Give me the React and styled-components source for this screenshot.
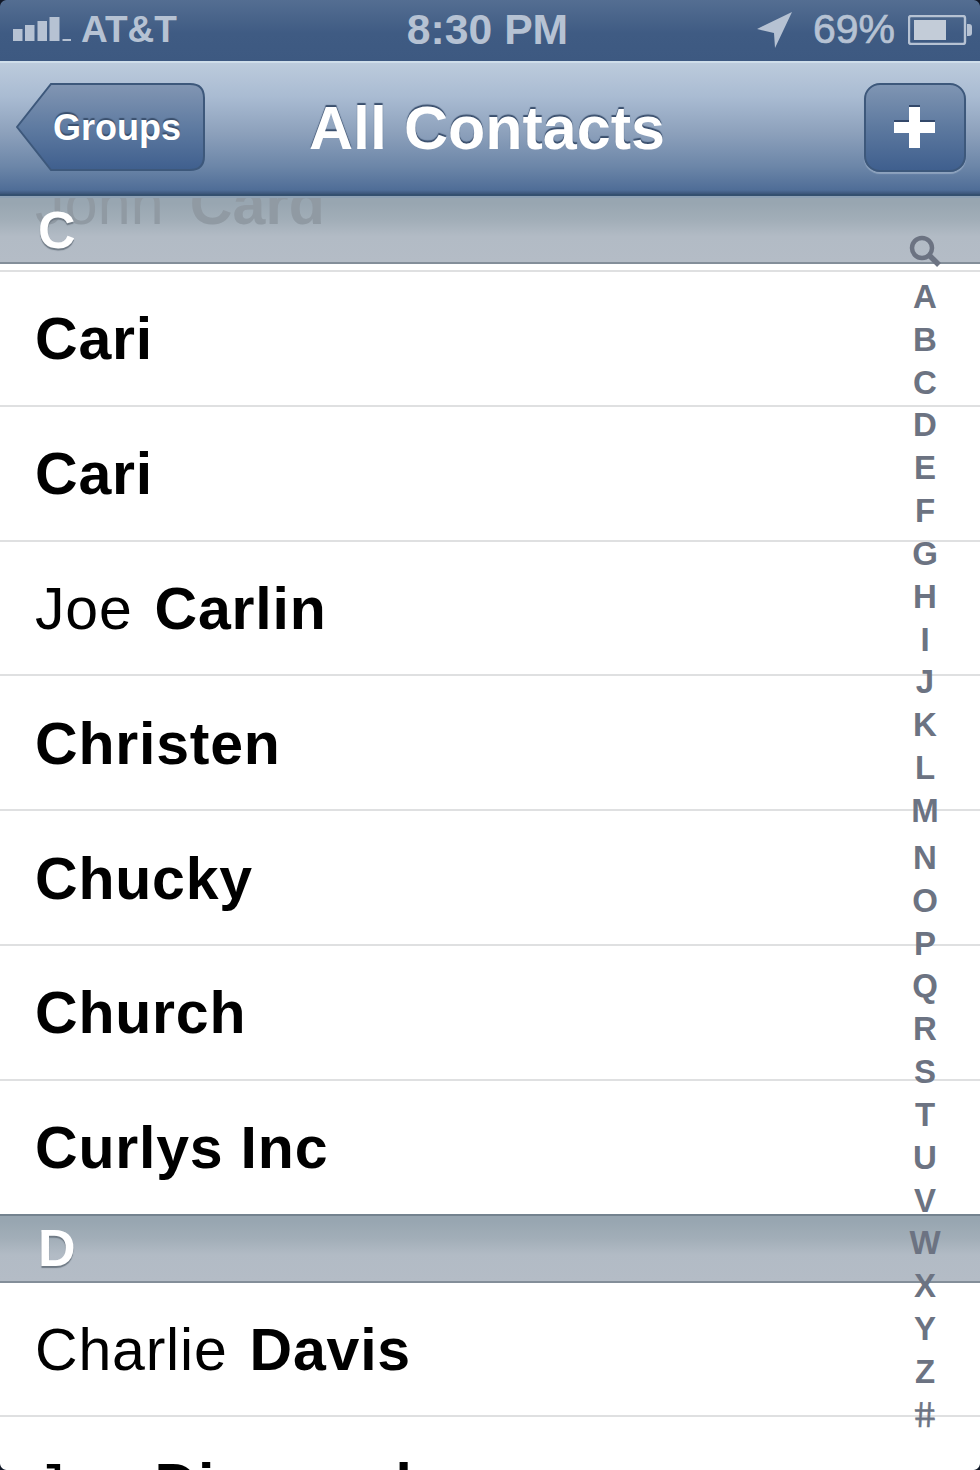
import React from "react";
import styled, { createGlobalStyle } from "styled-components";

const Global = createGlobalStyle`
  html, body { margin: 0; padding: 0; background: #fff; }
  body { font-family: "Liberation Sans", Arial, sans-serif; }
`;

const Phone = styled.div`
  position: relative;
  width: 980px;
  height: 1470px;
  overflow: hidden;
  background: #fff;
`;

const Corner = styled.div`
  position: absolute;
  width: 7px;
  height: 7px;
  ${(p) => (p.$right ? "right: 0;" : "left: 0;")}
  ${(p) => (p.$bottom ? "bottom: 0;" : "top: 0;")}
  background: radial-gradient(
    circle at ${(p) => (p.$right ? "0" : "100%")} ${(p) => (p.$bottom ? "0" : "100%")},
    transparent 6.5px,
    #111827 7.5px
  );
`;

const StatusBar = styled.div`
  height: 61px;
  box-sizing: border-box;
  padding: 0 8px 2px 13px;
  display: grid;
  grid-template-columns: 1fr auto 1fr;
  align-items: center;
  background: linear-gradient(#546e92, #3f5b83 55%, #3d5981);
  color: #b6c2d3;
  font-weight: 700;
`;

const StatusLeft = styled.div`
  display: flex;
  align-items: center;
  gap: 10px;
  font-size: 37px;
`;

const StatusRight = styled.div`
  display: flex;
  align-items: center;
  justify-content: flex-end;
  gap: 20px;
`;

const Clock = styled.div`
  font-size: 42.7px;
  margin-right: 10px;
`;

const Percent = styled.span`
  font-weight: 400;
  font-size: 41px;
  margin-right: -7px;
  -webkit-text-stroke: 0.7px #b6c2d3;
`;

const NavBar = styled.div`
  height: 135px;
  box-sizing: border-box;
  padding: 20px 14px 0 16px;
  display: flex;
  justify-content: space-between;
  align-items: flex-start;
  position: relative;
  background: linear-gradient(#bccbdc 0, #a9bbd2 26%, #8ca0bb 54%, #6c86a8 79%, #4f6d97 97%, #3b5578 100%);
  border-top: 2px solid #cfdeea;
  border-bottom: 2px solid #34506f;
`;

const BackButton = styled.button`
  position: relative;
  width: 190px;
  height: 89px;
  border: 0;
  padding: 0 0 0 37px;
  background: none;
  color: #fff;
  font: 700 36px "Liberation Sans", Arial, sans-serif;
  text-align: left;
  text-shadow: 0 -2px 1px #3a4f6d;
`;

const BackShape = styled.svg`
  position: absolute;
  inset: 0;
  z-index: 0;
`;

const BackLabel = styled.span`
  position: relative;
  z-index: 1;
`;

const Title = styled.div`
  position: absolute;
  left: 0;
  right: 6px;
  top: 30px;
  text-align: center;
  color: #fff;
  font-size: 61px;
  font-weight: 700;
  line-height: 70px;
  text-shadow: 0 -2px 1px #3a4f6d;
  pointer-events: none;
`;

const AddButton = styled.button`
  width: 102px;
  height: 89px;
  border-radius: 16px;
  border: 2px solid #3d587b;
  box-shadow: 0 2px 1px #8ea3be;
  background: linear-gradient(#7f95b3, #5d799f 50%, #3f5f8e);
  display: flex;
  align-items: center;
  justify-content: center;
  padding: 0 2px 0 0;
`;

const PlusIcon = styled.svg`
  filter: drop-shadow(0 -2px 0 #33486a);
`;

const SectionHeader = styled.div`
  position: relative;
  height: ${(p) => p.$height}px;
  box-sizing: border-box;
  overflow: hidden;
  padding-left: 38px;
  display: flex;
  align-items: center;
  background: linear-gradient(#98a6b1 0, #98a6b1 8%, #a2aeb8 35%, #b2bbc5 60%, #b4bcc6 100%);
  border-top: 2px solid ${(p) => p.$top};
  border-bottom: 2px solid #838e99;
  color: #fff;
  font-size: 52px;
  font-weight: 700;
  text-shadow: 0 2px 1px #6f7a85;
`;

const Ghost = styled.span`
  position: absolute;
  left: 35px;
  top: -29px;
  display: flex;
  gap: 26px;
  font-size: 59px;
  font-weight: 700;
  line-height: 70px;
  letter-spacing: 0.2px;
  color: #909aa3;
  text-shadow: none;
  white-space: pre;
`;

const GhostFirst = styled.span`
  font-weight: 400;
`;

const HeaderLetter = styled.span`
  position: relative;
  line-height: 1;
  margin-top: ${(p) => p.$shift || 0}px;
`;

const Gap = styled.div`
  height: 6px;
  border-bottom: 2px solid #dfe0e1;
`;

const Row = styled.div`
  height: ${(p) => p.$height}px;
  box-sizing: border-box;
  padding: 2px 0 0 35px;
  display: flex;
  align-items: center;
  gap: 22px;
  font-size: 59px;
  letter-spacing: 0.8px;
  color: #000;
  border-bottom: ${(p) => (p.$last ? 0 : "2px solid #dfe0e1")};
  white-space: pre;
`;

const First = styled.span`
  font-weight: 400;
`;

const Last = styled.span`
  font-weight: 700;
`;

const Index = styled.div`
  position: absolute;
  top: 233px;
  left: 895px;
  width: 60px;
  display: flex;
  flex-direction: column;
  align-items: center;
  color: #6c7382;
  font-size: 33px;
  font-weight: 700;
`;

const IndexItem = styled.div`
  flex: none;
  height: 42.85px;
  line-height: 42.85px;
  width: 100%;
  margin-top: ${(p) => p.$extra || 0}px;
  text-align: center;
  display: flex;
  align-items: center;
  justify-content: center;
`;

const SearchGlyph = styled.svg`
  margin-top: -6px;
`;

const Hash = styled.span`
  display: inline-block;
  font-size: 36px;
  font-weight: 400;
  transform: skewX(9deg);
  -webkit-text-stroke: 0.6px #6c7382;
`;

const rows = [
  ["", "Cari"],
  ["", "Cari"],
  ["Joe", "Carlin"],
  ["", "Christen"],
  ["", "Chucky"],
  ["", "Church"],
  ["", "Curlys Inc"],
];

const letters = "ABCDEFGHIJKLMNOPQRSTUVWXYZ".split("");

const Name = ({ first, last }) => (
  <>
    {first ? <First>{first}</First> : null}
    <Last>{last}</Last>
  </>
);

export default function App() {
  return (
    <Phone>
      <Global />
      <StatusBar>
        <StatusLeft>
          <svg width="58" height="25" viewBox="0 0 58 25">
            <g fill="#b6c2d3">
              <rect x="0" y="12" width="9.5" height="12" />
              <rect x="12" y="8" width="9.5" height="16" />
              <rect x="24.5" y="4" width="9.5" height="20" />
              <rect x="36.500" y="0" width="10" height="24" />
              <rect x="49.500" y="22" width="8.5" height="2" />
            </g>
          </svg>
          <span>AT&amp;T</span>
        </StatusLeft>
        <Clock>8:30 PM</Clock>
        <StatusRight>
          <svg width="36" height="36" viewBox="0 0 36 36">
            <path d="M35 0 L0 17 L17 21 L18 36 Z" fill="#b6c2d3" />
          </svg>
          <Percent>69%</Percent>
          <svg width="64" height="30" viewBox="0 0 64 30">
            <rect x="1" y="1" width="56" height="28" rx="2" fill="none" stroke="#b6c2d3" strokeWidth="2.4" />
            <rect x="6" y="5" width="32" height="20" fill="#c3ccd8" />
            <path d="M59 9h2q3 0 3 3v6q0 3-3 3h-2z" fill="#b6c2d3" />
          </svg>
        </StatusRight>
      </StatusBar>
      <NavBar>
        <BackButton>
          <BackShape width="190" height="89" viewBox="0 0 190 89">
            <defs>
              <linearGradient id="backFill" x1="0" y1="0" x2="0" y2="1">
                <stop offset="0" stopColor="#8296b3" />
                <stop offset="0.5" stopColor="#5f7ba1" />
                <stop offset="1" stopColor="#3f5f8e" />
              </linearGradient>
            </defs>
            <path
              d="M35 1 H174 Q188 1 188 15 V73 Q188 87 174 87 H35 L1 44 Z"
              fill="url(#backFill)"
              stroke="#3d587b"
              strokeWidth="2"
            />
          </BackShape>
          <BackLabel>Groups</BackLabel>
        </BackButton>
        <Title>All Contacts</Title>
        <AddButton aria-label="Add">
          <PlusIcon width="41" height="41" viewBox="0 0 41 41">
            <path d="M15 0h11v15h15v11H26v15H15V26H0V15h15z" fill="#fff" />
          </PlusIcon>
        </AddButton>
      </NavBar>
      <SectionHeader $height={68} $top="#8ea1b4">
        <Ghost>
          <GhostFirst>John</GhostFirst>
          <span>Card</span>
        </Ghost>
        <HeaderLetter $shift={-1}>C</HeaderLetter>
      </SectionHeader>
      <Gap />
      {rows.map(([first, last], i) => (
        <Row key={i} $height={i === 6 ? 133.2 : 134.8} $last={i === 6}>
          <Name first={first} last={last} />
        </Row>
      ))}
      <SectionHeader $height={69} $top="#74838f">
        <HeaderLetter>D</HeaderLetter>
      </SectionHeader>
      <Row $height={134.5}>
        <Name first="Charlie" last="Davis" />
      </Row>
      <Row $height={134} $last>
        <Name first="Joe" last="Diamond" />
      </Row>
      <Index>
        <IndexItem>
          <SearchGlyph width="32" height="32" viewBox="0 0 32 32">
            <circle cx="13" cy="13" r="10" fill="none" stroke="#6c7382" strokeWidth="4.5" />
            <path d="M20 20 L30 30" stroke="#6c7382" strokeWidth="5.5" />
          </SearchGlyph>
        </IndexItem>
        {letters.map((l) => (
          <IndexItem key={l} $extra={l === "N" ? 4 : 0}>{l}</IndexItem>
        ))}
        <IndexItem>
          <Hash>#</Hash>
        </IndexItem>
      </Index>
      <Corner />
      <Corner $right />
      <Corner $bottom />
      <Corner $right $bottom />
    </Phone>
  );
}
